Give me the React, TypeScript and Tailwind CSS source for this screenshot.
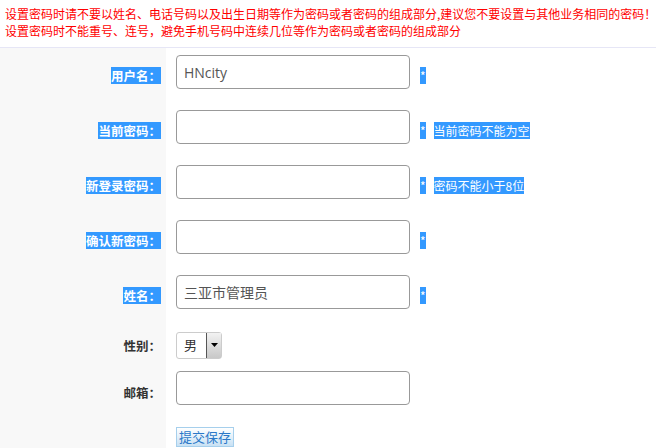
const cjk = "font-['Noto_Sans_CJK_SC',sans-serif] [text-spacing-trim:space-all]";

function Label({ text, selected }: { text: string; selected: boolean }) {
    return (
        <div className="w-[166px] shrink-0 self-stretch bg-[#f8f8f8] flex items-center justify-end pr-[5px]">
            <span
                className={`text-[12.5px] leading-[17px] font-bold ${
                    selected ? "bg-[#3399ff] text-white" : "text-[#333]"
                }`}
            >
                {text}
            </span>
        </div>
    );
}

function TextRow({ label, value, hint }: { label: string; value?: string; hint?: string }) {
    return (
        <div className="flex h-[55px]">
            <Label text={label} selected />
            <div className="flex items-center pl-[10px]">
                <div className="w-[234px] h-[34px] mb-[7px] border border-[#999] rounded-[4px] flex items-center px-[7px] text-[14px] text-[#555] font-['Open_Sans','Noto_Sans_CJK_SC',sans-serif]">
                    {value}
                </div>
                <span className="ml-[10px] text-[12px] leading-[17px] bg-[#3399ff] text-white">*</span>
                {hint && (
                    <span className="ml-[8px] text-[12px] leading-[17px] bg-[#3399ff] text-white">{hint}</span>
                )}
            </div>
        </div>
    );
}

export default function App() {
    return (
        <div className={`w-[656px] h-[448px] flex flex-col bg-white overflow-hidden ${cjk}`}>
            {/* warning text */}
            <div className="pt-[5px] pb-[8px] pl-[5px] border-b border-[#e6e6f6] text-[12px] leading-[17px] text-[#ff0000] whitespace-nowrap">
                <div>设置密码时请不要以姓名、电话号码以及出生日期等作为密码或者密码的组成部分,建议您不要设置与其他业务相同的密码！</div>
                <div>设置密码时不能重号、连号，避免手机号码中连续几位等作为密码或者密码的组成部分</div>
            </div>

            {/* form */}
            <div className="flex-1 flex flex-col">
                <TextRow label="用户名：" value="HNcity" />
                <TextRow label="当前密码：" hint="当前密码不能为空" />
                <TextRow label="新登录密码：" hint="密码不能小于8位" />
                <TextRow label="确认新密码：" />
                <TextRow label="姓名：" value="三亚市管理员" />

                <div className="flex h-[44px]">
                    <Label text="性别：" selected={false} />
                    <div className="flex items-center pl-[10px]">
                        <div className="w-[46px] h-[27px] border border-[#ccc] rounded-[3px] flex items-center">
                            <span className="pl-[7px] w-[30px] text-[13px] text-[#333]">男</span>
                            <div className="w-[15px] h-[25px] border-l border-[#555] bg-gradient-to-b from-[#f2f2f2] to-[#c8c8c8] flex items-center justify-center">
                                <svg width="7" height="4" viewBox="0 0 7 4">
                                    <path d="M0 0 L7 0 L3.5 4 Z" fill="#000" />
                                </svg>
                            </div>
                        </div>
                    </div>
                </div>

                <div className="flex h-[50px]">
                    <Label text="邮箱：" selected={false} />
                    <div className="flex items-center pl-[10px]">
                        <div className="w-[234px] h-[34px] mb-[8px] border border-[#999] rounded-[4px]" />
                    </div>
                </div>

                <div className="flex flex-1">
                    <div className="w-[166px] shrink-0 bg-[#f8f8f8]" />
                    <div className="flex items-start pl-[10px] pt-[10px]">
                        <button className="block h-[20px] px-[2px] border border-[#a6cfec] bg-gradient-to-b from-white to-[#c8e1f4] text-[13px] leading-[18px] text-[#2a78c8]">
                            提交保存
                        </button>
                    </div>
                </div>
            </div>
        </div>
    );
}
